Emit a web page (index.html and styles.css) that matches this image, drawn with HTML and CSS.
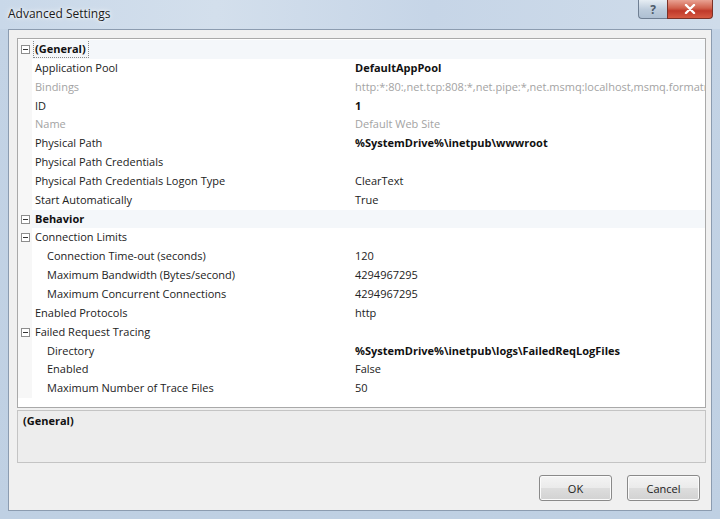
FILE: index.html
```html
<!DOCTYPE html>
<html lang="en">

<head>
    <meta charset="UTF-8">
    <title>Advanced Settings</title>
    <link rel="stylesheet" href="styles.css">
</head>

<body>
    <div class="window">
        <!-- Title bar with caption buttons -->
        <div class="titlebar">
            <span class="title">Advanced Settings</span>
            <div class="caption-buttons">
                <span class="cap-btn help">?</span>
                <span class="cap-btn close">
                    <svg width="12" height="10" viewBox="0 0 12 10">
                        <path d="M2 1 L10 9 M10 1 L2 9" stroke="#fff" stroke-width="2.4" stroke-linecap="round" />
                    </svg>
                </span>
            </div>
        </div>

        <div class="client">
            <!-- Property grid -->
            <div class="grid">
                <div class="row category">
                    <span class="gutter"><span class="toggle"></span></span>
                    <span class="name"><span class="focus">(General)</span></span>
                    <span class="value"></span>
                </div>
                <div class="row">
                    <span class="gutter"></span>
                    <span class="name">Application Pool</span>
                    <span class="value bold">DefaultAppPool</span>
                </div>
                <div class="row disabled">
                    <span class="gutter"></span>
                    <span class="name">Bindings</span>
                    <span class="value">http:*:80:,net.tcp:808:*,net.pipe:*,net.msmq:localhost,msmq.formatn</span>
                </div>
                <div class="row">
                    <span class="gutter"></span>
                    <span class="name">ID</span>
                    <span class="value bold">1</span>
                </div>
                <div class="row disabled">
                    <span class="gutter"></span>
                    <span class="name">Name</span>
                    <span class="value">Default Web Site</span>
                </div>
                <div class="row">
                    <span class="gutter"></span>
                    <span class="name">Physical Path</span>
                    <span class="value bold">%SystemDrive%\inetpub\wwwroot</span>
                </div>
                <div class="row">
                    <span class="gutter"></span>
                    <span class="name">Physical Path Credentials</span>
                    <span class="value"></span>
                </div>
                <div class="row">
                    <span class="gutter"></span>
                    <span class="name">Physical Path Credentials Logon Type</span>
                    <span class="value">ClearText</span>
                </div>
                <div class="row">
                    <span class="gutter"></span>
                    <span class="name">Start Automatically</span>
                    <span class="value">True</span>
                </div>
                <div class="row category">
                    <span class="gutter"><span class="toggle"></span></span>
                    <span class="name">Behavior</span>
                    <span class="value"></span>
                </div>
                <div class="row">
                    <span class="gutter"><span class="toggle"></span></span>
                    <span class="name">Connection Limits</span>
                    <span class="value"></span>
                </div>
                <div class="row nested">
                    <span class="gutter"></span>
                    <span class="name">Connection Time-out (seconds)</span>
                    <span class="value">120</span>
                </div>
                <div class="row nested">
                    <span class="gutter"></span>
                    <span class="name">Maximum Bandwidth (Bytes/second)</span>
                    <span class="value">4294967295</span>
                </div>
                <div class="row nested">
                    <span class="gutter"></span>
                    <span class="name">Maximum Concurrent Connections</span>
                    <span class="value">4294967295</span>
                </div>
                <div class="row">
                    <span class="gutter"></span>
                    <span class="name">Enabled Protocols</span>
                    <span class="value">http</span>
                </div>
                <div class="row">
                    <span class="gutter"><span class="toggle"></span></span>
                    <span class="name">Failed Request Tracing</span>
                    <span class="value"></span>
                </div>
                <div class="row nested">
                    <span class="gutter"></span>
                    <span class="name">Directory</span>
                    <span class="value bold">%SystemDrive%\inetpub\logs\FailedReqLogFiles</span>
                </div>
                <div class="row nested">
                    <span class="gutter"></span>
                    <span class="name">Enabled</span>
                    <span class="value">False</span>
                </div>
                <div class="row nested">
                    <span class="gutter"></span>
                    <span class="name">Maximum Number of Trace Files</span>
                    <span class="value">50</span>
                </div>
            </div>

            <!-- Description panel -->
            <div class="desc">
                <span class="desc-title">(General)</span>
            </div>

            <div class="buttons">
                <button type="button">OK</button>
                <button type="button">Cancel</button>
            </div>
        </div>
    </div>
</body>

</html>
```

FILE: styles.css
```css
/* Reset */
* {
    margin: 0;
    padding: 0;
    box-sizing: border-box;
}

body {
    width: 720px;
    height: 519px;
    overflow: hidden;
    font-family: 'Open Sans', 'Noto Sans', sans-serif;
    background: #c8d7e8;
}

/* Glass frame */
.window {
    height: 519px;
    display: flex;
    flex-direction: column;
    background: linear-gradient(to bottom, #d4e0ed 0%, #c3d3e5 6%, #bfd0e3 100%);
}

.titlebar {
    height: 29px;
    display: flex;
    align-items: flex-start;
    justify-content: space-between;
    background: linear-gradient(to right, #c9d8e9 0%, #d3dfec 30%, #c6d5e7 60%, #cfdcea 100%);
}

.title {
    font-size: 12px;
    color: #1b1b1b;
    padding: 5px 0 0 8px;
    text-shadow: 0 0 6px #ffffff, 0 0 3px #ffffff;
}

.caption-buttons {
    display: flex;
    margin-right: 7px;
}

.cap-btn {
    height: 19px;
    display: flex;
    align-items: center;
    justify-content: center;
    border: 1px solid #6f7f93;
    border-top: none;
}

.help {
    width: 29px;
    border-radius: 0 0 0 4px;
    border-right: none;
    background: linear-gradient(to bottom, #e6edf4, #bccbdb 55%, #aebfd2);
    color: #4d5a6a;
    font-size: 12px;
    font-weight: bold;
}

.close {
    width: 46px;
    border-radius: 0 0 4px 0;
    border-color: #7b3127;
    background: linear-gradient(to bottom, #e9a293, #d0604c 45%, #c0392a 60%, #d65a42);
}

/* Client area */
.client {
    flex: 1;
    margin: 0 8px 8px 8px;
    background: #f0f0f0;
    border: 1px solid #8c9cb0;
    padding: 8px 5px 0 8px;
    display: flex;
    flex-direction: column;
}

/* Property grid */
.grid {
    height: 370px;
    padding-top: 1px;
    background: #ffffff;
    border: 1px solid #a9a9a9;
    overflow: hidden;
    font-size: 11px;
    color: #222222;
}

.row {
    display: grid;
    grid-template-columns: 14px 320px 1fr;
    height: 18.85px;
    line-height: 18.85px;
}

.gutter {
    background: #f7f7f7;
    display: flex;
    align-items: center;
    justify-content: center;
}

.toggle {
    width: 9px;
    height: 9px;
    border: 1px solid #8d8d8d;
    background: #ffffff;
    position: relative;
}

/* the minus sign in the expand box */
.toggle::after {
    content: '';
    position: absolute;
    left: 1px;
    right: 1px;
    top: 3px;
    height: 1px;
    background: #333333;
}

.name {
    padding-left: 3px;
    white-space: nowrap;
    overflow: hidden;
}

.value {
    padding-left: 3px;
    white-space: nowrap;
    overflow: hidden;
}

.category {
    background: #f4f7fa;
}

.category .name {
    font-weight: bold;
    color: #111111;
}

.focus {
    border: 1px dotted #8a8a8a;
    padding: 1px 2px 1px 1px;
    margin-left: -2px;
}

.nested .name {
    padding-left: 15px;
}

.disabled {
    color: #a3a3a3;
}

.bold {
    font-weight: bold;
    color: #111111;
}

/* Description panel */
.desc {
    height: 53px;
    margin-top: 2px;
    background: #ededed;
    border: 1px solid #c4c4c4;
    padding: 2px 5px;
    font-size: 11px;
}

.desc-title {
    font-weight: bold;
    color: #111111;
}

/* Dialog buttons */
.buttons {
    display: flex;
    justify-content: flex-end;
    gap: 15px;
    margin-top: 12px;
    padding-right: 6px;
}

button {
    width: 73px;
    height: 26px;
    font-family: 'Open Sans', 'Noto Sans', sans-serif;
    font-size: 11px;
    color: #222222;
    border: 1px solid #8a8a8a;
    border-radius: 3px;
    background: linear-gradient(to bottom, #f4f4f4 0%, #ebebeb 48%, #dddddd 52%, #d2d2d2 100%);
    box-shadow: inset 0 0 0 1px #fbfbfb;
}
```
